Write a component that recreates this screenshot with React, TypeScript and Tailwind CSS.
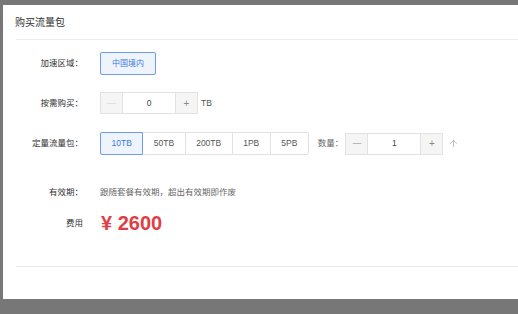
import React, { useState } from 'react';
import { ArrowUp } from 'lucide-react';

const FONT = { fontFamily: '"Liberation Sans", "Noto Sans CJK SC", sans-serif' };

const packs = ['10TB', '50TB', '200TB', '1PB', '5PB'];

function Label({ children }: { children: React.ReactNode }) {
  return (
    <div className="w-[80px] shrink-0 text-right text-[8.5px] text-[#333]">{children}</div>
  );
}

function Stepper({ value, minusDisabled }: { value: number; minusDisabled?: boolean }) {
  return (
    <div className="flex h-[22px] border border-[#e2e2e2] text-[8.5px]">
      <button
        className={`w-[22px] bg-[#f5f5f5] border-r border-[#e2e2e2] flex items-center justify-center ${
          minusDisabled ? 'text-[#d0d0d0]' : 'text-[#888]'
        }`}
      >
        —
      </button>
      <div className="w-[52px] flex items-center justify-center text-[#444]">{value}</div>
      <button className="w-[22px] bg-[#f5f5f5] border-l border-[#e2e2e2] flex items-center justify-center text-[#888] text-[10px]">
        +
      </button>
    </div>
  );
}

export default function App() {
  const [pack, setPack] = useState('10TB');

  return (
    <div className="w-[518px] h-[314px] overflow-hidden bg-[#777777] pt-[5px] pl-[3px]" style={FONT}>
      <div className="w-[560px] h-[294px] bg-white flex flex-col">
        {/* header */}
        <div className="h-[34px] px-[12px] flex items-center text-[10px] text-[#333]">购买流量包</div>
        <div className="ml-[13px] border-t border-[#ececec]" />

        {/* 加速区域 */}
        <div className="mt-[12px] h-[23px] flex items-center">
          <Label>加速区域：</Label>
          <button className="ml-[17px] h-[23px] px-[11px] border border-[#6f9be8] bg-[#eef4fe] rounded-[2px] text-[8px] text-[#3c78d8]">
            中国境内
          </button>
        </div>

        {/* 按需购买 */}
        <div className="mt-[17px] h-[22px] flex items-center">
          <Label>按需购买：</Label>
          <div className="ml-[17px]">
            <Stepper value={0} minusDisabled />
          </div>
          <span className="ml-[3px] text-[8.5px] text-[#555]">TB</span>
        </div>

        {/* 定量流量包 */}
        <div className="mt-[18px] h-[23px] flex items-center">
          <Label>定量流量包：</Label>
          <div className="ml-[17px] flex">
            {packs.map((p, i) => {
              const active = p === pack;
              return (
                <button
                  key={p}
                  onClick={() => setPack(p)}
                  className={`h-[23px] px-[10.5px] border text-[8.5px] ${i > 0 ? '-ml-px' : ''} ${
                    active
                      ? 'relative z-10 border-[#6f9be8] bg-[#eef4fe] text-[#3c78d8] rounded-l-[2px]'
                      : 'border-[#e2e2e2] bg-white text-[#555]'
                  } ${i === packs.length - 1 ? 'rounded-r-[2px]' : ''}`}
                >
                  {p}
                </button>
              );
            })}
          </div>
          <span className="ml-[9px] text-[8.5px] text-[#666]">数量：</span>
          <div className="ml-[2px]">
            <Stepper value={1} />
          </div>
          <ArrowUp className="ml-[5px] w-[11px] h-[11px] text-[#999]" strokeWidth={1.4} />
        </div>

        {/* 有效期 */}
        <div className="mt-[25px] h-[24px] flex items-center">
          <Label>有效期：</Label>
          <span className="ml-[17px] text-[8.5px] text-[#666]">跟随套餐有效期，超出有效期即作废</span>
        </div>

        {/* 费用 */}
        <div className="mt-[7px] h-[24px] flex items-center">
          <div className="w-[80px] shrink-0 text-right text-[8.5px] text-[#333]">费用</div>
          <span className="ml-[18px] text-[20px] font-semibold text-[#e03e44] whitespace-pre">¥ 2600</span>
        </div>

        <div className="mt-[31px] ml-[13px] border-t border-[#ececec]" />
      </div>
    </div>
  );
}
